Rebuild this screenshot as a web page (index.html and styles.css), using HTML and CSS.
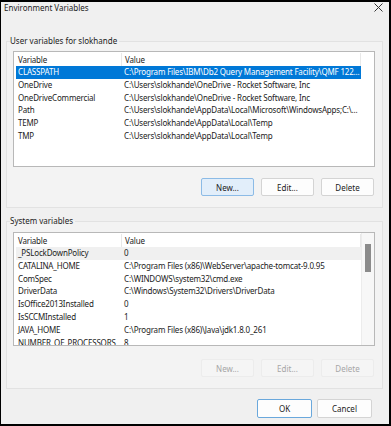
FILE: index.html
```html
<!DOCTYPE html>
<html lang="en">
<head>
  <meta charset="UTF-8" />
  <title>Environment Variables</title>
  <link rel="stylesheet" href="styles.css">
</head>
<body>
  <div class="dialog">
    <div class="titlebar">
      <span class="title">Environment Variables</span>
      <svg class="close" width="9" height="9" viewBox="0 0 9 9"><path d="M0.5 0.5 L8.5 8.5 M8.5 0.5 L0.5 8.5" stroke="#333" stroke-width="1" fill="none"/></svg>
    </div>

    <fieldset class="group group-user">
      <legend>User variables for slokhande</legend>
      <div class="list list-user">
        <div class="list-body">
          <div class="list-head">
            <span class="col-name">Variable</span>
            <span class="col-value">Value</span>
          </div>
          <div class="row selected"><span class="col-name">CLASSPATH</span><span class="col-value">C:\Program Files\IBM\Db2 Query Management Facility\QMF 122...</span></div>
          <div class="row"><span class="col-name">OneDrive</span><span class="col-value">C:\Users\slokhande\OneDrive - Rocket Software, Inc</span></div>
          <div class="row"><span class="col-name">OneDriveCommercial</span><span class="col-value">C:\Users\slokhande\OneDrive - Rocket Software, Inc</span></div>
          <div class="row"><span class="col-name">Path</span><span class="col-value">C:\Users\slokhande\AppData\Local\Microsoft\WindowsApps;C:\...</span></div>
          <div class="row"><span class="col-name">TEMP</span><span class="col-value">C:\Users\slokhande\AppData\Local\Temp</span></div>
          <div class="row"><span class="col-name">TMP</span><span class="col-value">C:\Users\slokhande\AppData\Local\Temp</span></div>
        </div>
        <div class="scroll-space"></div>
      </div>
      <div class="buttons">
        <button class="btn default">New...</button>
        <button class="btn">Edit...</button>
        <button class="btn">Delete</button>
      </div>
    </fieldset>

    <fieldset class="group group-system">
      <legend>System variables</legend>
      <div class="list list-system">
        <div class="list-body">
          <div class="list-head">
            <span class="col-name">Variable</span>
            <span class="col-value">Value</span>
          </div>
          <div class="row hover"><span class="col-name">_PSLockDownPolicy</span><span class="col-value">0</span></div>
          <div class="row"><span class="col-name">CATALINA_HOME</span><span class="col-value">C:\Program Files (x86)\WebServer\apache-tomcat-9.0.95</span></div>
          <div class="row"><span class="col-name">ComSpec</span><span class="col-value">C:\WINDOWS\system32\cmd.exe</span></div>
          <div class="row"><span class="col-name">DriverData</span><span class="col-value">C:\Windows\System32\Drivers\DriverData</span></div>
          <div class="row"><span class="col-name">IsOffice2013Installed</span><span class="col-value">0</span></div>
          <div class="row"><span class="col-name">IsSCCMInstalled</span><span class="col-value">1</span></div>
          <div class="row"><span class="col-name">JAVA_HOME</span><span class="col-value">C:\Program Files (x86)\Java\jdk1.8.0_261</span></div>
          <div class="row"><span class="col-name">NUMBER_OF_PROCESSORS</span><span class="col-value">8</span></div>
        </div>
        <div class="scrollbar"><div class="thumb"></div></div>
      </div>
      <div class="buttons">
        <button class="btn" disabled>New...</button>
        <button class="btn" disabled>Edit...</button>
        <button class="btn" disabled>Delete</button>
      </div>
    </fieldset>

    <div class="footer">
      <button class="btn btn-wide focus">OK</button>
      <button class="btn btn-wide">Cancel</button>
    </div>
  </div>
</body>
</html>
```

FILE: styles.css
```css
* {
  box-sizing: border-box;
  margin: 0;
  padding: 0;
}
body {
  font-family: 'Noto Sans', sans-serif;
  font-size: 8px;
  color: #1b1b1b;
  background: #ffffff;
}
.dialog {
  width: 391px;
  height: 426px;
  border: 2px solid #000;
  border-left-width: 1px;
  background-color: #f0f0f0;
  overflow: hidden;
}
.titlebar {
  height: 11px;
  line-height: 11px;
  display: flex;
  justify-content: space-between;
  align-items: center;
  padding: 0 6px 0 3px;
}
.title {
  color: #222;
}
.close {
  display: block;
}
.group {
  min-width: 0;
  border: 1px solid #e2e2e2;
  background-color: #f3f3f3;
  margin: 0 6px 0 5px;
  padding: 0 7px 11px 6px;
}
.group legend {
  line-height: 12px;
  margin-left: -3px;
  padding: 0 2px 0 0;
}
.group-user {
  margin-top: 22px;
}
.group-system {
  margin-top: 7px;
}
.list {
  display: flex;
  background-color: #fff;
  border: 1px solid #b8b8b8;
  margin-top: 4px;
  overflow: hidden;
}
.list-user {
  height: 116px;
}
.list-system {
  height: 114px;
  margin-top: 5px;
}
.list-body {
  flex: 1;
  min-width: 0;
  padding-left: 2px;
}
.list-head, .row {
  display: flex;
  white-space: nowrap;
  letter-spacing: -0.18px;
}
.list-head {
  height: 14px;
  line-height: 14px;
  padding-top: 1px;
}
.row {
  height: 12.8px;
  line-height: 12.8px;
}
.col-name {
  width: 105px;
  flex: none;
  padding-left: 2px;
  overflow: hidden;
}
.col-value {
  flex: 1;
  min-width: 0;
  padding-left: 3px;
  overflow: hidden;
}
.list-head .col-value {
  border-left: 1px solid #e8e8e8;
  border-right: 1px solid #e8e8e8;
}
.row.selected {
  background-color: #0078d7;
  color: #fff;
}
.row.hover {
  background-color: #f0f0f0;
}
.scroll-space {
  width: 13px;
  flex: none;
}
.scrollbar {
  width: 13px;
  flex: none;
  background-color: #f7f7f7;
  border-left: 1px solid #ececec;
  padding: 11px 0 0 3px;
}
.thumb {
  width: 6px;
  height: 28px;
  background-color: #8b8b8b;
}
.buttons {
  display: flex;
  justify-content: flex-end;
  gap: 7px;
  margin-top: 11px;
  padding-right: 1px;
}
.group-system .buttons {
  margin-top: 13px;
}
.btn {
  font-family: 'Noto Sans', sans-serif;
  font-size: 8px;
  width: 53px;
  height: 18px;
  background-color: #fdfdfd;
  border: 1px solid #d4d4d4;
  border-radius: 2px;
  color: #1b1b1b;
}
.btn.default {
  background-color: #e2eefa;
  border-color: #8cbbe6;
}
.btn:disabled {
  background-color: #f5f5f5;
  border-color: #ececec;
  color: #a6a6a6;
}
.footer {
  display: flex;
  justify-content: flex-end;
  gap: 5px;
  margin-top: 10px;
  padding-right: 17px;
}
.btn-wide {
  width: 55px;
  height: 19px;
}
.btn.focus {
  border-color: #6aa8dc;
}
```
